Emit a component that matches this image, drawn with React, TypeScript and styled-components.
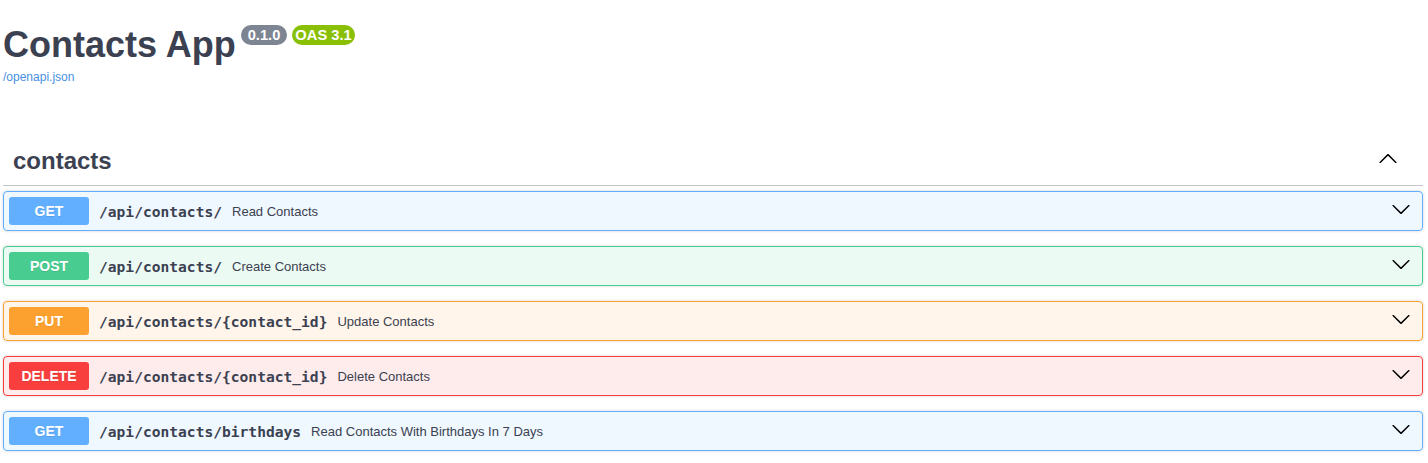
import React from 'react';
import styled, { createGlobalStyle } from 'styled-components';

type Method = 'get' | 'post' | 'put' | 'delete';

const methodColors: Record<Method, { main: string; bg: string }> = {
  get: { main: '#61affe', bg: 'rgba(97, 175, 254, 0.1)' },
  post: { main: '#49cc90', bg: 'rgba(73, 204, 144, 0.1)' },
  put: { main: '#fca130', bg: 'rgba(252, 161, 48, 0.1)' },
  delete: { main: '#f93e3e', bg: 'rgba(249, 62, 62, 0.1)' },
};

const GlobalStyle = createGlobalStyle`
  html, body {
    margin: 0;
    padding: 0;
    background: #fff;
  }
  body {
    font-family: "Liberation Sans", Arial, sans-serif;
    color: #3b4151;
  }
`;

const Wrapper = styled.div`
  padding: 24px 5px 0 3px;
`;

const Info = styled.div`
  margin-bottom: 53px;
`;

const TitleRow = styled.div`
  display: flex;
  align-items: flex-start;
  gap: 5px;
`;

const Title = styled.h2`
  margin: 0;
  font-size: 36px;
  line-height: 41px;
  font-weight: 700;
  color: #3b4151;
`;

const Badge = styled.span<{ $bg: string; $pad: number }>`
  display: inline-block;
  margin-top: 1px;
  height: 20px;
  line-height: 20px;
  padding: 0 ${({ $pad }) => $pad}px;
  border-radius: 57px;
  background: ${({ $bg }) => $bg};
  color: #fff;
  font-size: 14.7px;
  font-weight: 700;
  white-space: nowrap;
`;

const SpecLink = styled.a`
  display: block;
  margin-top: 5px;
  font-size: 12px;
  line-height: 14px;
  color: #4990e2;
  text-decoration: none;
`;

const TagHeader = styled.div`
  display: flex;
  align-items: center;
  padding: 10px 20px 10px 10px;
  margin-bottom: 5px;
  border-bottom: 1px solid rgba(59, 65, 81, 0.3);
`;

const TagName = styled.h3`
  flex: 1;
  margin: 0;
  font-size: 24px;
  line-height: 28px;
  font-weight: 700;
  color: #3b4151;
`;

const ArrowButton = styled.button<{ $offset: number }>`
  display: flex;
  align-items: center;
  border: none;
  background: none;
  padding: 0 ${({ $offset }) => $offset}px;
  margin-top: -4px;
  cursor: pointer;
`;

const OpBlock = styled.div<{ $method: Method }>`
  margin-bottom: 15px;
  border: 1px solid ${({ $method }) => methodColors[$method].main};
  background: ${({ $method }) => methodColors[$method].bg};
  border-radius: 4px;
  box-shadow: 0 0 3px rgba(0, 0, 0, 0.19);
`;

const Summary = styled.div`
  display: flex;
  align-items: center;
  padding: 5px;
  cursor: pointer;
`;

const MethodBadge = styled.span<{ $method: Method }>`
  min-width: 80px;
  padding: 6px 0;
  border-radius: 3px;
  background: ${({ $method }) => methodColors[$method].main};
  color: #fff;
  font-size: 14px;
  line-height: 16px;
  font-weight: 700;
  text-align: center;
  text-shadow: 0 1px 0 rgba(0, 0, 0, 0.1);
`;

const PathText = styled.span`
  padding: 0 10px;
  font-family: "DejaVu Sans Mono", "Liberation Mono", monospace;
  font-size: 14.6px;
  font-weight: 700;
  color: #3b4151;
  white-space: nowrap;
`;

const Description = styled.span`
  flex: 1;
  font-size: 13px;
  color: #3b4151;
`;

const Chevron = ({ up }: { up?: boolean }) => (
  <svg
    width="20"
    height="20"
    viewBox="0 0 20 20"
    style={up ? { transform: 'rotate(180deg)' } : undefined}
  >
    <path
      fill="#000"
      d="M17.418 6.109c.272-.268.709-.268.979 0s.271.701 0 .969l-7.908 7.83c-.27.268-.707.268-.979 0l-7.908-7.83c-.27-.268-.27-.701 0-.969.271-.268.709-.268.979 0L10 13.25l7.418-7.141z"
    />
  </svg>
);

const operations: { method: Method; path: string; summary: string }[] = [
  { method: 'get', path: '/api/contacts/', summary: 'Read Contacts' },
  { method: 'post', path: '/api/contacts/', summary: 'Create Contacts' },
  { method: 'put', path: '/api/contacts/{contact_id}', summary: 'Update Contacts' },
  { method: 'delete', path: '/api/contacts/{contact_id}', summary: 'Delete Contacts' },
  { method: 'get', path: '/api/contacts/birthdays', summary: 'Read Contacts With Birthdays In 7 Days' },
];

export default function App() {
  return (
    <>
      <GlobalStyle />
      <Wrapper>
        <Info>
          <TitleRow>
            <Title>Contacts App</Title>
            <Badge $bg="#7d8492" $pad={7}>0.1.0</Badge>
            <Badge $bg="#89bf04" $pad={3}>OAS 3.1</Badge>
          </TitleRow>
          <SpecLink href="#">/openapi.json</SpecLink>
        </Info>

        <TagHeader>
          <TagName>contacts</TagName>
          <ArrowButton $offset={5}>
            <Chevron up />
          </ArrowButton>
        </TagHeader>

        {operations.map((op, i) => (
          <OpBlock key={i} $method={op.method}>
            <Summary>
              <MethodBadge $method={op.method}>{op.method.toUpperCase()}</MethodBadge>
              <PathText>{op.path}</PathText>
              <Description>{op.summary}</Description>
              <ArrowButton $offset={6}>
                <Chevron />
              </ArrowButton>
            </Summary>
          </OpBlock>
        ))}
      </Wrapper>
    </>
  );
}
